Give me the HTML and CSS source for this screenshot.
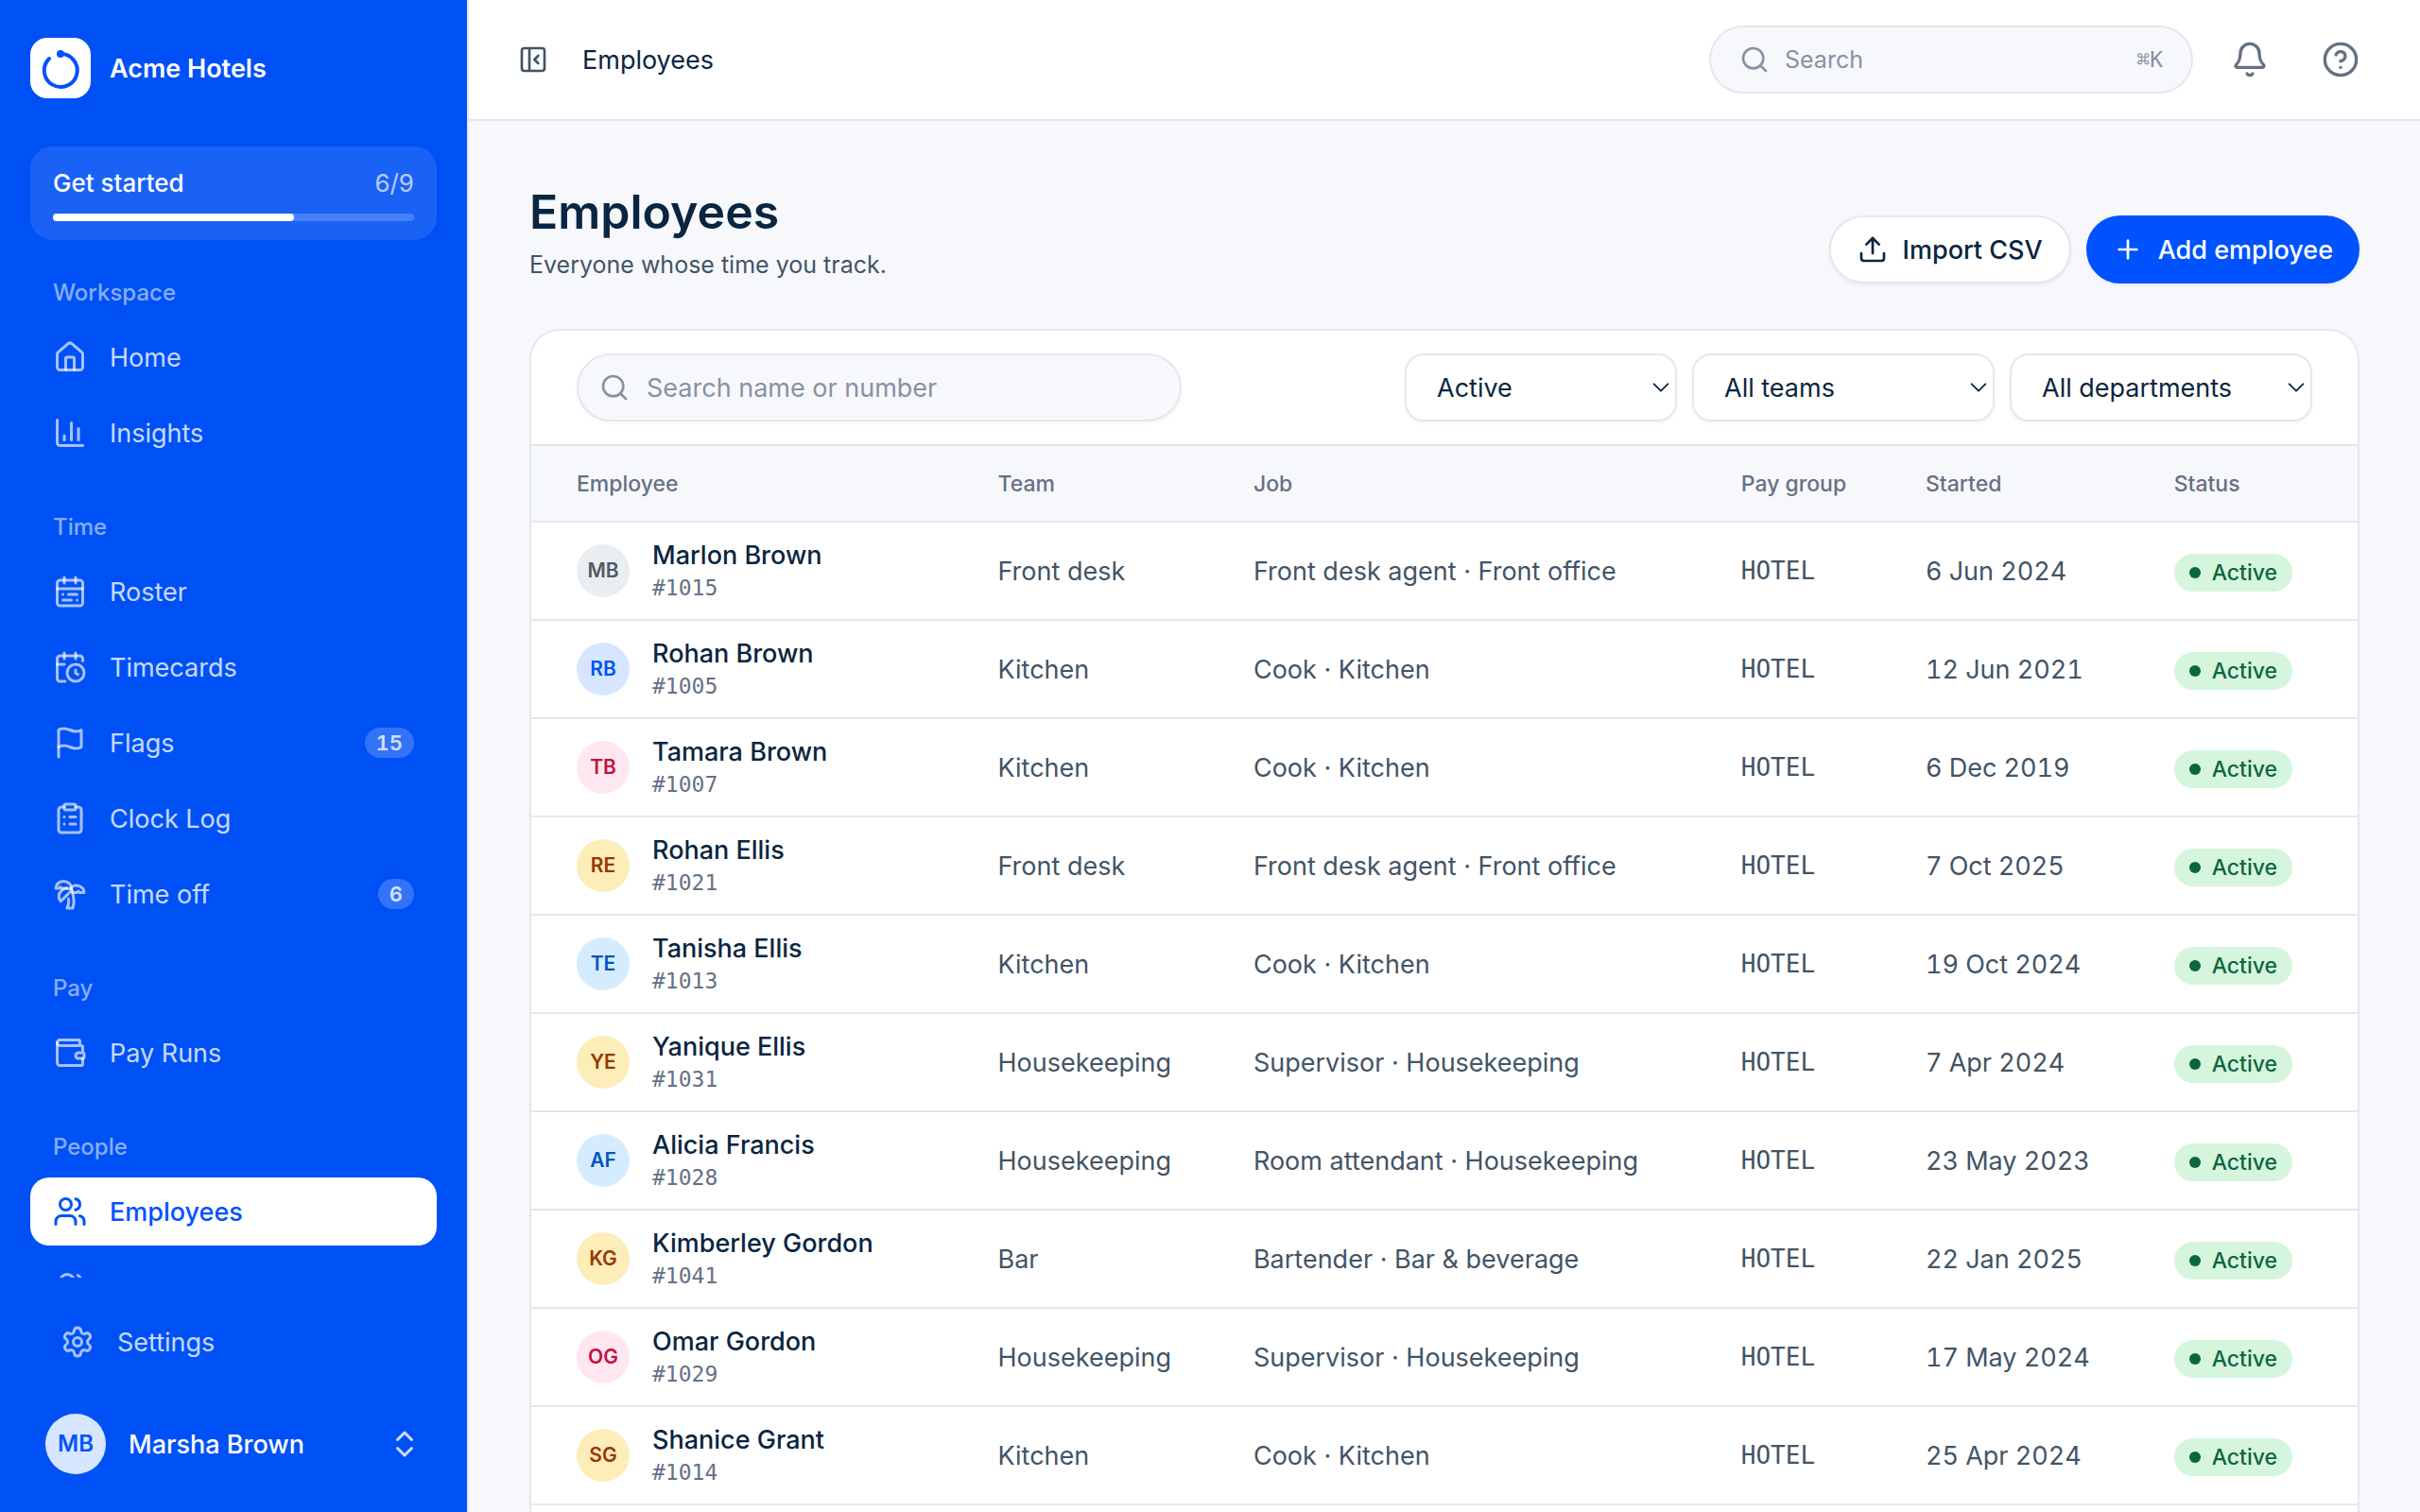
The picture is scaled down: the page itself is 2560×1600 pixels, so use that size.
FILE: index.html
```html
<!DOCTYPE html>
<html lang="en">
<head>
  <meta charset="UTF-8" />
  <meta name="viewport" content="width=device-width, initial-scale=1" />
  <title>Employees</title>
  <link rel="stylesheet" href="styles.css">
</head>
<body>
  <svg class="sprite" aria-hidden="true">
    <symbol id="i-home" viewBox="0 0 24 24"><path d="M15 21v-8a1 1 0 0 0-1-1h-4a1 1 0 0 0-1 1v8"/><path d="M3 10a2 2 0 0 1 .709-1.528l7-5.999a2 2 0 0 1 2.582 0l7 5.999A2 2 0 0 1 21 10v9a2 2 0 0 1-2 2H5a2 2 0 0 1-2-2z"/></symbol>
    <symbol id="i-chart" viewBox="0 0 24 24"><path d="M3 3v16a2 2 0 0 0 2 2h16"/><path d="M18 17V9"/><path d="M13 17V5"/><path d="M8 17v-3"/></symbol>
    <symbol id="i-roster" viewBox="0 0 24 24"><rect x="3" y="4" width="18" height="18" rx="2"/><path d="M16 2v4"/><path d="M3 10h18"/><path d="M8 2v4"/><path d="M17 14h-6"/><path d="M13 18H7"/><path d="M7 14h.01"/><path d="M17 18h.01"/></symbol>
    <symbol id="i-timecard" viewBox="0 0 24 24"><path d="M16 14v2.2l1.6 1"/><path d="M16 2v4"/><path d="M21 7.5V6a2 2 0 0 0-2-2H5a2 2 0 0 0-2 2v14a2 2 0 0 0 2 2h3.5"/><path d="M3 10h5"/><path d="M8 2v4"/><circle cx="16" cy="16" r="6"/></symbol>
    <symbol id="i-flag" viewBox="0 0 24 24"><path d="M4 15s1-1 4-1 5 2 8 2 4-1 4-1V3s-1 1-4 1-5-2-8-2-4 1-4 1z"/><path d="M4 22v-7"/></symbol>
    <symbol id="i-clipboard" viewBox="0 0 24 24"><rect x="8" y="2" width="8" height="4" rx="1"/><path d="M16 4h2a2 2 0 0 1 2 2v14a2 2 0 0 1-2 2H6a2 2 0 0 1-2-2V6a2 2 0 0 1 2-2h2"/><path d="M12 11h4"/><path d="M12 16h4"/><path d="M8 11h.01"/><path d="M8 16h.01"/></symbol>
    <symbol id="i-palm" viewBox="0 0 24 24"><path d="M13 8c0-2.76-2.46-5-5.5-5S2 5.24 2 8h2l1-1 1 1h4"/><path d="M13 7.14A5.82 5.82 0 0 1 16.5 6c3.04 0 5.5 2.24 5.5 5h-3l-1-1-1 1h-3"/><path d="M5.89 9.71c-2.15 2.15-2.3 5.47-.35 7.43l4.24-4.25.7-.7.71-.71 2.12-2.12c-1.95-1.96-5.27-1.8-7.42.35"/><path d="M11 15.5c.5 2.5-.17 4.5-1 6.5h4c2-5.5-.5-12-1-14"/></symbol>
    <symbol id="i-wallet" viewBox="0 0 24 24"><path d="M19 7V4a1 1 0 0 0-1-1H5a2 2 0 0 0 0 4h15a1 1 0 0 1 1 1v4h-3a2 2 0 0 0 0 4h3a1 1 0 0 0 1-1v-2a1 1 0 0 0-1-1"/><path d="M3 5v14a2 2 0 0 0 2 2h15a1 1 0 0 0 1-1v-4"/></symbol>
    <symbol id="i-users" viewBox="0 0 24 24"><path d="M16 21v-2a4 4 0 0 0-4-4H6a4 4 0 0 0-4 4v2"/><path d="M16 3.128a4 4 0 0 1 0 7.744"/><path d="M22 21v-2a4 4 0 0 0-3-3.87"/><circle cx="9" cy="7" r="4"/></symbol>
    <symbol id="i-teams" viewBox="0 0 24 24"><path d="M18 21a8 8 0 0 0-16 0"/><circle cx="10" cy="8" r="5"/><path d="M22 20c0-3.37-2-6.5-4-8a5 5 0 0 0-.45-8.3"/></symbol>
    <symbol id="i-settings" viewBox="0 0 24 24"><path d="M9.671 4.136a2.34 2.34 0 0 1 4.659 0 2.34 2.34 0 0 0 3.319 1.915 2.34 2.34 0 0 1 2.33 4.033 2.34 2.34 0 0 0 0 3.831 2.34 2.34 0 0 1-2.33 4.033 2.34 2.34 0 0 0-3.319 1.915 2.34 2.34 0 0 1-4.659 0 2.34 2.34 0 0 0-3.32-1.915 2.34 2.34 0 0 1-2.33-4.033 2.34 2.34 0 0 0 0-3.831A2.34 2.34 0 0 1 6.35 6.051a2.34 2.34 0 0 0 3.319-1.915"/><circle cx="12" cy="12" r="3"/></symbol>
    <symbol id="i-updown" viewBox="0 0 24 24"><path d="m7 15 5 5 5-5"/><path d="m7 9 5-5 5 5"/></symbol>
    <symbol id="i-panel" viewBox="0 0 24 24"><rect x="3" y="3" width="18" height="18" rx="2"/><path d="M9 3v18"/><path d="m16 15-3-3 3-3"/></symbol>
    <symbol id="i-search" viewBox="0 0 24 24"><circle cx="11" cy="11" r="8"/><path d="m21 21-4.34-4.34"/></symbol>
    <symbol id="i-bell" viewBox="0 0 24 24"><path d="M10.268 21a2 2 0 0 0 3.464 0"/><path d="M3.262 15.326A1 1 0 0 0 4 17h16a1 1 0 0 0 .74-1.673C19.41 13.956 18 12.499 18 8A6 6 0 0 0 6 8c0 4.499-1.411 5.956-2.738 7.326"/></symbol>
    <symbol id="i-help" viewBox="0 0 24 24"><circle cx="12" cy="12" r="10"/><path d="M9.09 9a3 3 0 0 1 5.83 1c0 2-3 3-3 3"/><path d="M12 17h.01"/></symbol>
    <symbol id="i-upload" viewBox="0 0 24 24"><path d="M12 3v12"/><path d="m17 8-5-5-5 5"/><path d="M21 15v4a2 2 0 0 1-2 2H5a2 2 0 0 1-2-2v-4"/></symbol>
    <symbol id="i-plus" viewBox="0 0 24 24"><path d="M5 12h14"/><path d="M12 5v14"/></symbol>
    <symbol id="i-down" viewBox="0 0 24 24"><path d="m4 8 8 8 8-8"/></symbol>
  </svg>

  <div class="app">
    <aside class="sidebar">
      <div class="brand">
        <span class="brand-mark">
          <svg viewBox="0 0 64 64" aria-hidden="true">
            <path class="ring" d="M32 17a17.5 17.5 0 1 1-12 5"/>
            <circle class="dot" cx="32" cy="17" r="4"/>
          </svg>
        </span>
        <span class="brand-name">Acme Hotels</span>
      </div>

      <div class="setup">
        <div class="setup-row"><span>Get started</span><span class="setup-count">6/9</span></div>
        <div class="setup-track"><div class="setup-fill"></div></div>
      </div>

      <nav class="nav">
        <h2>Workspace</h2>
        <a href="#"><svg class="icon"><use href="#i-home"/></svg>Home</a>
        <a href="#"><svg class="icon"><use href="#i-chart"/></svg>Insights</a>
        <h2>Time</h2>
        <a href="#"><svg class="icon"><use href="#i-roster"/></svg>Roster</a>
        <a href="#"><svg class="icon"><use href="#i-timecard"/></svg>Timecards</a>
        <a href="#"><svg class="icon"><use href="#i-flag"/></svg>Flags<span class="count">15</span></a>
        <a href="#"><svg class="icon"><use href="#i-clipboard"/></svg>Clock Log</a>
        <a href="#"><svg class="icon"><use href="#i-palm"/></svg>Time off<span class="count">6</span></a>
        <h2>Pay</h2>
        <a href="#"><svg class="icon"><use href="#i-wallet"/></svg>Pay Runs</a>
        <h2>People</h2>
        <a href="#" class="active"><svg class="icon"><use href="#i-users"/></svg>Employees</a>
        <a href="#" aria-label="Teams"><svg class="icon"><use href="#i-teams"/></svg></a>
      </nav>

      <div class="sidebar-foot">
        <a href="#" class="settings"><svg class="icon"><use href="#i-settings"/></svg>Settings</a>
        <button type="button" class="account">
          <span class="account-avatar">MB</span>
          <span class="account-name">Marsha Brown</span>
          <svg class="icon"><use href="#i-updown"/></svg>
        </button>
      </div>
    </aside>

    <div class="page">
      <header class="topbar">
        <button type="button" class="toggle" aria-label="Toggle sidebar"><svg class="icon icon-sm"><use href="#i-panel"/></svg></button>
        <span class="crumb">Employees</span>
        <label class="search search-top">
          <svg class="icon icon-sm"><use href="#i-search"/></svg>
          <input type="search" placeholder="Search" aria-label="Search" />
          <kbd>⌘K</kbd>
        </label>
        <button type="button" class="icon-btn" aria-label="Notifications"><svg class="icon icon-lg"><use href="#i-bell"/></svg></button>
        <button type="button" class="icon-btn" aria-label="Help"><svg class="icon icon-lg"><use href="#i-help"/></svg></button>
      </header>

      <main class="content">
        <div class="heading">
          <div>
            <h1>Employees</h1>
            <p>Everyone whose time you track.</p>
          </div>
          <div class="actions">
            <button type="button" class="btn"><svg class="icon icon-sm"><use href="#i-upload"/></svg>Import CSV</button>
            <button type="button" class="btn btn-primary"><svg class="icon icon-sm"><use href="#i-plus"/></svg>Add employee</button>
          </div>
        </div>

        <section class="card">
          <div class="toolbar">
            <label class="search search-table">
              <svg class="icon icon-sm"><use href="#i-search"/></svg>
              <input type="search" placeholder="Search name or number" aria-label="Search name or number" />
            </label>
            <div class="filters">
              <div class="select select-status">
                <select aria-label="Status"><option>Active</option></select>
                <svg class="icon"><use href="#i-down"/></svg>
              </div>
              <div class="select">
                <select aria-label="Team"><option>All teams</option></select>
                <svg class="icon"><use href="#i-down"/></svg>
              </div>
              <div class="select">
                <select aria-label="Department"><option>All departments</option></select>
                <svg class="icon"><use href="#i-down"/></svg>
              </div>
            </div>
          </div>

          <table>
            <thead>
              <tr>
                <th class="col-employee">Employee</th>
                <th class="col-team">Team</th>
                <th class="col-job">Job</th>
                <th class="col-pay">Pay group</th>
                <th class="col-started">Started</th>
                <th class="col-status">Status</th>
              </tr>
            </thead>
            <tbody id="employees"></tbody>
          </table>
        </section>
      </main>
    </div>
  </div>

  <script>
    const employees = [
      ['Marlon Brown', 1015, 'Front desk', 'Front desk agent · Front office', '6 Jun 2024', 'gray'],
      ['Rohan Brown', 1005, 'Kitchen', 'Cook · Kitchen', '12 Jun 2021', 'blue'],
      ['Tamara Brown', 1007, 'Kitchen', 'Cook · Kitchen', '6 Dec 2019', 'pink'],
      ['Rohan Ellis', 1021, 'Front desk', 'Front desk agent · Front office', '7 Oct 2025', 'amber'],
      ['Tanisha Ellis', 1013, 'Kitchen', 'Cook · Kitchen', '19 Oct 2024', 'sky'],
      ['Yanique Ellis', 1031, 'Housekeeping', 'Supervisor · Housekeeping', '7 Apr 2024', 'amber'],
      ['Alicia Francis', 1028, 'Housekeeping', 'Room attendant · Housekeeping', '23 May 2023', 'sky'],
      ['Kimberley Gordon', 1041, 'Bar', 'Bartender · Bar & beverage', '22 Jan 2025', 'amber'],
      ['Omar Gordon', 1029, 'Housekeeping', 'Supervisor · Housekeeping', '17 May 2024', 'pink'],
      ['Shanice Grant', 1014, 'Kitchen', 'Cook · Kitchen', '25 Apr 2024', 'amber']
    ];

    const tbody = document.getElementById('employees');
    employees.forEach(([name, number, team, job, started, tone]) => {
      const initials = name.split(' ').map(part => part[0]).join('');
      const tr = document.createElement('tr');
      tr.innerHTML = `
        <td><div class="person">
          <span class="avatar ${tone}">${initials}</span>
          <div><div class="name">${name}</div><div class="number">#${number}</div></div>
        </div></td>
        <td>${team}</td>
        <td>${job.replace('&', '&amp;')}</td>
        <td class="mono">HOTEL</td>
        <td class="date">${started}</td>
        <td class="status"><span class="badge">Active</span></td>`;
      tbody.appendChild(tr);
    });
  </script>
</body>
</html>
```
FILE: styles.css
```css
:root {
  --blue: #0052ff;
  --sidebar: #0051f5;
  --navy: #0a2540;
  --slate: #425466;
  --gray: #667085;
  --muted: #8792a2;
  --line: #e3e8ee;
  --bg: #f7f8fc;
}

* {
  box-sizing: border-box;
}

body {
  margin: 0;
  font-family: Inter, "Liberation Sans", sans-serif;
  font-size: 27px;
  color: var(--navy);
  background: var(--bg);
}

h1, h2, p {
  margin: 0;
}

button, input, select {
  font: inherit;
  color: inherit;
}

button {
  border: none;
  background: none;
  padding: 0;
  cursor: pointer;
}

a {
  color: inherit;
  text-decoration: none;
}

.sprite {
  display: none;
}

.icon {
  width: 36px;
  height: 36px;
  flex-shrink: 0;
  fill: none;
  stroke: currentColor;
  stroke-width: 2;
  stroke-linecap: round;
  stroke-linejoin: round;
}
.icon-sm {
  width: 32px;
  height: 32px;
}
.icon-lg {
  width: 40px;
  height: 40px;
}

.app {
  display: flex;
  height: 100vh;
  overflow: hidden;
}

/* sidebar */
.sidebar {
  width: 496px;
  flex-shrink: 0;
  display: flex;
  flex-direction: column;
  padding: 40px 32px 24px;
  background: var(--sidebar);
  border-right: 2px solid var(--line);
  color: rgba(255, 255, 255, 0.8);
}

.brand {
  display: flex;
  align-items: center;
  gap: 20px;
  margin-bottom: 51px;
}
.brand-mark {
  width: 64px;
  height: 64px;
  border-radius: 18px;
  background: #fff;
}
.brand-mark svg {
  display: block;
}
.ring {
  fill: none;
  stroke: var(--blue);
  stroke-width: 4;
  stroke-linecap: round;
}
.dot {
  fill: var(--blue);
}
.brand-name {
  color: #fff;
  font-weight: 600;
}

.setup {
  padding: 23px 24px 20px;
  border-radius: 24px;
  background: rgba(255, 255, 255, 0.1);
}
.setup-row {
  display: flex;
  justify-content: space-between;
  line-height: 32px;
  margin-bottom: 16px;
  font-size: 26px;
  font-weight: 500;
  color: #fff;
}
.setup-count {
  font-weight: 400;
  color: rgba(255, 255, 255, 0.7);
}
.setup-track {
  height: 8px;
  border-radius: 4px;
  background: rgba(255, 255, 255, 0.2);
}
.setup-fill {
  width: 66.7%;
  height: 8px;
  border-radius: 4px;
  background: #fff;
}

.nav {
  flex: 1;
  min-height: 0;
  overflow: hidden;
  display: flex;
  flex-direction: column;
  gap: 8px;
}
.nav h2 {
  flex-shrink: 0;
  margin-top: 32px;
  padding: 0 24px;
  line-height: 48px;
  font-size: 24px;
  font-weight: 500;
  color: rgba(255, 255, 255, 0.55);
}
.nav a,
.settings {
  flex-shrink: 0;
  display: flex;
  align-items: center;
  gap: 24px;
  height: 72px;
  padding: 0 24px;
  border-radius: 20px;
}
.nav .icon,
.settings .icon {
  color: rgba(255, 255, 255, 0.65);
}
.nav .active {
  background: #fff;
  color: var(--blue);
  font-weight: 500;
}
.nav .active .icon {
  color: var(--blue);
}
.count {
  margin-left: auto;
  padding: 0 12px;
  border-radius: 16px;
  line-height: 32px;
  font-size: 22px;
  font-weight: 600;
  font-variant-numeric: tabular-nums;
  background: rgba(255, 255, 255, 0.2);
}

.sidebar-foot {
  padding-top: 32px;
}
.settings {
  padding: 0 32px;
}
.account {
  display: flex;
  align-items: center;
  gap: 24px;
  width: 100%;
  margin-top: 24px;
  padding: 16px;
  text-align: left;
}
.account-avatar {
  width: 64px;
  line-height: 64px;
  border-radius: 50%;
  text-align: center;
  font-size: 24px;
  font-weight: 600;
  color: var(--blue);
  background: #d6e6ff;
}
.account-name {
  flex: 1;
  font-weight: 500;
  color: #fff;
}
.account .icon {
  color: rgba(255, 255, 255, 0.8);
}

/* top bar */
.page {
  flex: 1;
  min-width: 0;
  display: flex;
  flex-direction: column;
}
.topbar {
  flex-shrink: 0;
  display: flex;
  align-items: center;
  gap: 24px;
  height: 128px;
  padding: 0 48px 0 40px;
  background: #fff;
  border-bottom: 2px solid var(--line);
}
.toggle {
  display: flex;
  padding: 12px;
  color: var(--slate);
}
.icon-btn {
  display: flex;
  padding: 16px;
  color: var(--gray);
}
.search {
  display: flex;
  align-items: center;
  height: 72px;
  border: 2px solid var(--line);
  border-radius: 36px;
  background: var(--bg);
  color: var(--muted);
}
.search input {
  flex: 1;
  min-width: 0;
  border: none;
  outline: none;
  padding: 0;
  background: none;
}
.search input::placeholder {
  color: var(--muted);
  opacity: 1;
}
.search-top {
  width: 512px;
  margin-left: auto;
  padding: 0 30px;
  gap: 16px;
  font-size: 25px;
}
kbd {
  font-family: "DejaVu Sans Mono", monospace;
  font-size: 23px;
}

/* page content */
.content {
  flex: 1;
  min-height: 0;
  overflow: hidden;
  display: flex;
  flex-direction: column;
  padding: 64px 64px 0;
}
.heading {
  display: flex;
  justify-content: space-between;
  align-items: flex-end;
  margin-bottom: 48px;
}
h1 {
  line-height: 64px;
  font-size: 50px;
  font-weight: 600;
}
.heading p {
  margin-top: 4px;
  line-height: 40px;
  font-size: 25px;
  color: var(--slate);
}
.actions {
  display: flex;
  gap: 16px;
}
.btn {
  display: flex;
  align-items: center;
  gap: 16px;
  height: 72px;
  padding: 0 28px;
  border: 2px solid var(--line);
  border-radius: 36px;
  background: #fff;
  font-weight: 500;
  box-shadow: 0 2px 4px rgba(10, 37, 64, 0.06);
}
.btn-primary {
  padding: 0 26px;
  border-color: var(--blue);
  background: var(--blue);
  color: #fff;
}

.card {
  flex: 1 0 auto;
  border: 2px solid var(--line);
  border-radius: 32px 32px 0 0;
  border-bottom: none;
  background: #fff;
  overflow: hidden;
}
.toolbar {
  display: flex;
  justify-content: space-between;
  align-items: center;
  padding: 24px 48px;
  border-bottom: 2px solid var(--line);
}
.search-table {
  width: 640px;
  padding: 0 22px;
  gap: 18px;
  box-shadow: 0 2px 4px rgba(10, 37, 64, 0.04);
}
.filters {
  display: flex;
  gap: 16px;
}
.select {
  position: relative;
  width: 320px;
}
.select-status {
  width: 288px;
}
.select select {
  appearance: none;
  width: 100%;
  height: 72px;
  padding: 0 32px;
  border: 2px solid var(--line);
  border-radius: 20px;
  background: #fff;
  box-shadow: 0 2px 4px rgba(10, 37, 64, 0.04);
}
.select .icon {
  position: absolute;
  right: 6px;
  top: 25px;
  width: 22px;
  height: 22px;
  pointer-events: none;
}

table {
  width: 100%;
  table-layout: fixed;
  border-collapse: collapse;
}
th, td {
  padding: 0 24px;
  border-bottom: 2px solid var(--line);
  text-align: left;
  white-space: nowrap;
}
th:first-child,
td:first-child {
  padding-left: 48px;
}
th {
  height: 80px;
  font-size: 23px;
  font-weight: 500;
  color: var(--gray);
  background: var(--bg);
}
td {
  height: 104px;
  color: var(--slate);
}
.col-employee { width: 24.3%; }
.col-team { width: 14%; }
.col-job { width: 26.7%; }
.col-pay { width: 10.1%; }
.col-started { width: 13.6%; }
.col-status { width: 11.3%; }

.person {
  display: flex;
  align-items: center;
  gap: 24px;
}
.name {
  line-height: 36px;
  font-weight: 500;
  color: var(--navy);
}
.number {
  line-height: 32px;
  font-family: "DejaVu Sans Mono", monospace;
  font-size: 23px;
  color: var(--gray);
}
.mono {
  font-family: "DejaVu Sans Mono", monospace;
  font-size: 26px;
}
.date {
  font-variant-numeric: tabular-nums;
}
.status {
  padding-top: 4px;
}
.avatar {
  width: 56px;
  line-height: 56px;
  border-radius: 50%;
  text-align: center;
  font-size: 21px;
  font-weight: 600;
}
.gray { background: #ebeef1; color: #545969; }
.blue { background: #d6e6ff; color: #0052ff; }
.pink { background: #ffe7f2; color: #c4123f; }
.amber { background: #fcedb9; color: #983705; }
.sky { background: #d5ecff; color: #0055bc; }

.badge {
  display: inline-flex;
  align-items: center;
  gap: 12px;
  padding: 0 16px;
  border-radius: 20px;
  line-height: 40px;
  font-size: 23px;
  font-weight: 500;
  color: #0b6640;
  background: #d6f5dd;
}
.badge::before {
  content: "";
  width: 12px;
  height: 12px;
  border-radius: 50%;
  background: currentColor;
}
```
